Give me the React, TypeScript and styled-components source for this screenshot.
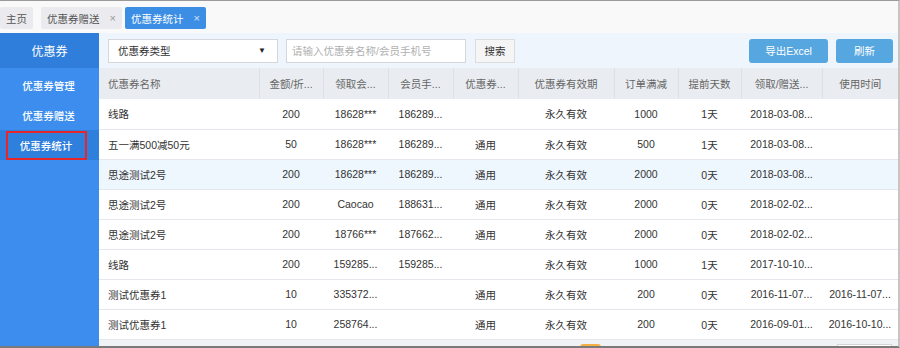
import React from "react";
import styled, { createGlobalStyle } from "styled-components";

const GlobalStyle = createGlobalStyle`
  html, body {
    margin: 0;
    padding: 0;
    background: #ffffff;
  }
  * {
    box-sizing: border-box;
  }
`;

const FONT = `"Liberation Sans", "Noto Sans CJK SC", sans-serif`;

const Page = styled.div`
  width: 900px;
  height: 348px;
  display: flex;
  flex-direction: column;
  overflow: hidden;
  border-top: 1px solid #9a9a9a;
  border-bottom: 2px solid #7a7a7a;
  border-right: 2px solid #c9c4bf;
  font-family: ${FONT};
  font-size: 10.5px;
  color: #333;
`;

const TabBar = styled.div`
  height: 32px;
  flex-shrink: 0;
  display: flex;
  align-items: center;
  padding-top: 2px;
  background: #f9f9fa;
`;

const Tab = styled.div<{ active?: boolean; gapAfter: number }>`
  height: 22px;
  display: flex;
  align-items: center;
  gap: 10px;
  padding: 0 6px;
  margin-right: ${(p) => p.gapAfter}px;
  border-radius: 2px;
  background: ${(p) => (p.active ? "#3c8ee4" : "#ebebef")};
  color: ${(p) => (p.active ? "#fff" : "#555")};
  font-size: 10.5px;
`;

const Close = styled.span<{ active?: boolean }>`
  color: ${(p) => (p.active ? "#cfe3f8" : "#999")};
  font-size: 11px;
`;

const Main = styled.div`
  flex: 1;
  display: flex;
  min-height: 0;
`;

const Sidebar = styled.div`
  width: 99px;
  flex-shrink: 0;
  background: #3c8ded;
  display: flex;
  flex-direction: column;
`;

const SideHeader = styled.div`
  height: 35px;
  display: flex;
  align-items: center;
  justify-content: center;
  background: #2f7edc;
  color: #fff;
  font-size: 12px;
  margin-bottom: 2px;
`;

const SideItem = styled.div<{ active?: boolean }>`
  height: 30px;
  display: flex;
  align-items: center;
  justify-content: center;
  padding-right: 2px;
  color: #fff;
  font-size: 10.5px;
  font-weight: 500;
  background: ${(p) => (p.active ? "#2f7fdd" : "transparent")};
`;

const Marked = styled.span`
  width: 81px;
  height: 29px;
  margin-left: -5px;
  margin-top: 1px;
  display: flex;
  align-items: center;
  justify-content: center;
  border: 2px solid #e8262a;
`;

const Content = styled.div`
  flex: 1;
  display: flex;
  flex-direction: column;
  min-width: 0;
`;

const Toolbar = styled.div`
  height: 35px;
  flex-shrink: 0;
  display: flex;
  align-items: center;
  padding: 0 5px 0 9px;
  background: #eef5fd;
`;

const Select = styled.div`
  width: 170px;
  height: 24px;
  display: flex;
  align-items: center;
  justify-content: space-between;
  padding: 0 9px;
  background: #fff;
  border: 1px solid #d4d8dc;
  color: #333;
`;

const Arrow = styled.span`
  font-size: 8px;
  color: #222;
  margin-right: 2px;
`;

const Input = styled.div`
  width: 180px;
  height: 24px;
  margin-left: 8px;
  display: flex;
  align-items: center;
  padding: 0 5px;
  background: #fff;
  border: 1px solid #d4d8dc;
  color: #b0b0b0;
`;

const SearchButton = styled.div`
  width: 40px;
  height: 24px;
  margin-left: 9px;
  display: flex;
  align-items: center;
  justify-content: center;
  background: #f5f5f5;
  border: 1px solid #dcdcdc;
  color: #333;
`;

const Spacer = styled.div`
  flex: 1;
`;

const BlueButton = styled.div<{ w: number }>`
  width: ${(p) => p.w}px;
  height: 24px;
  margin-left: 8px;
  display: flex;
  align-items: center;
  justify-content: center;
  background: #56a6e0;
  border-radius: 3px;
  color: #fff;
`;

const Table = styled.table`
  width: 799px;
  table-layout: fixed;
  border-collapse: collapse;
  flex-shrink: 0;
`;

const Th = styled.th<{ left?: boolean }>`
  height: 31px;
  padding: ${(p) => (p.left ? "0 4px 0 9px" : "0 3px")};
  background: #e9ecf0;
  color: #666;
  font-weight: normal;
  font-size: 10.5px;
  text-align: ${(p) => (p.left ? "left" : "center")};
  border-left: 1px solid #dde1e6;
  white-space: nowrap;
  overflow: hidden;
  &:first-child {
    border-left: none;
  }
`;

const Tr = styled.tr<{ hl?: boolean }>`
  background: ${(p) => (p.hl ? "#eef6fe" : "#fff")};
`;

const Td = styled.td<{ left?: boolean }>`
  height: 30px;
  padding: ${(p) => (p.left ? "0 4px 0 9px" : "0 3px")};
  font-size: 10.5px;
  color: #333;
  text-align: ${(p) => (p.left ? "left" : "center")};
  border-bottom: 1px solid #e4e7eb;
  white-space: nowrap;
  overflow: hidden;
`;

const Pager = styled.div`
  flex: 1;
  display: flex;
  align-items: flex-start;
  padding-top: 4px;
  background: #f1f2f5;
`;

const PageActive = styled.div`
  width: 21px;
  height: 20px;
  margin-left: 481px;
  border-radius: 3px;
  background: #f4b043;
`;

const PageJump = styled.div`
  width: 55px;
  height: 20px;
  margin-left: 236px;
  background: #fff;
  border: 1px solid #d6d6d6;
`;

const columns = [
  { title: "优惠券名称", width: 160, left: true },
  { title: "金额/折...", width: 64 },
  { title: "领取会...", width: 65 },
  { title: "会员手...", width: 65 },
  { title: "优惠券...", width: 65 },
  { title: "优惠券有效期", width: 96 },
  { title: "订单满减", width: 64 },
  { title: "提前天数", width: 63 },
  { title: "领取/赠送...", width: 81 },
  { title: "使用时间", width: 76 },
];

const rows: string[][] = [
  ["线路", "200", "18628***", "186289...", "", "永久有效", "1000", "1天", "2018-03-08...", ""],
  ["五一满500减50元", "50", "18628***", "186289...", "通用", "永久有效", "500", "1天", "2018-03-08...", ""],
  ["思途测试2号", "200", "18628***", "186289...", "通用", "永久有效", "2000", "0天", "2018-03-08...", ""],
  ["思途测试2号", "200", "Caocao", "188631...", "通用", "永久有效", "2000", "0天", "2018-02-02...", ""],
  ["思途测试2号", "200", "18766***", "187662...", "通用", "永久有效", "2000", "0天", "2018-02-02...", ""],
  ["线路", "200", "159285...", "159285...", "", "永久有效", "1000", "1天", "2017-10-10...", ""],
  ["测试优惠券1", "10", "335372...", "", "通用", "永久有效", "200", "0天", "2016-11-07...", "2016-11-07..."],
  ["测试优惠券1", "10", "258764...", "", "通用", "永久有效", "200", "0天", "2016-09-01...", "2016-10-10..."],
];

const menu = ["优惠券管理", "优惠券赠送", "优惠券统计"];

export default function App() {
  return (
    <>
      <GlobalStyle />
      <Page>
        <TabBar>
          <Tab gapAfter={8}>主页</Tab>
          <Tab gapAfter={3}>
            优惠券赠送<Close>×</Close>
          </Tab>
          <Tab active gapAfter={0}>
            优惠券统计<Close active>×</Close>
          </Tab>
        </TabBar>
        <Main>
          <Sidebar>
            <SideHeader>优惠券</SideHeader>
            {menu.map((m, i) =>
              i === 2 ? (
                <SideItem key={m} active>
                  <Marked>{m}</Marked>
                </SideItem>
              ) : (
                <SideItem key={m}>{m}</SideItem>
              )
            )}
          </Sidebar>
          <Content>
            <Toolbar>
              <Select>
                优惠券类型<Arrow>▼</Arrow>
              </Select>
              <Input>请输入优惠券名称/会员手机号</Input>
              <SearchButton>搜索</SearchButton>
              <Spacer />
              <BlueButton w={79}>导出Excel</BlueButton>
              <BlueButton w={57}>刷新</BlueButton>
            </Toolbar>
            <Table>
              <colgroup>
                {columns.map((c) => (
                  <col key={c.title} style={{ width: c.width }} />
                ))}
              </colgroup>
              <thead>
                <tr>
                  {columns.map((c) => (
                    <Th key={c.title} left={c.left}>
                      {c.title}
                    </Th>
                  ))}
                </tr>
              </thead>
              <tbody>
                {rows.map((r, i) => (
                  <Tr key={i} hl={i === 2}>
                    {r.map((cell, j) => (
                      <Td key={j} left={j === 0}>
                        {cell}
                      </Td>
                    ))}
                  </Tr>
                ))}
              </tbody>
            </Table>
            <Pager>
              <PageActive />
              <PageJump />
            </Pager>
          </Content>
        </Main>
      </Page>
    </>
  );
}
